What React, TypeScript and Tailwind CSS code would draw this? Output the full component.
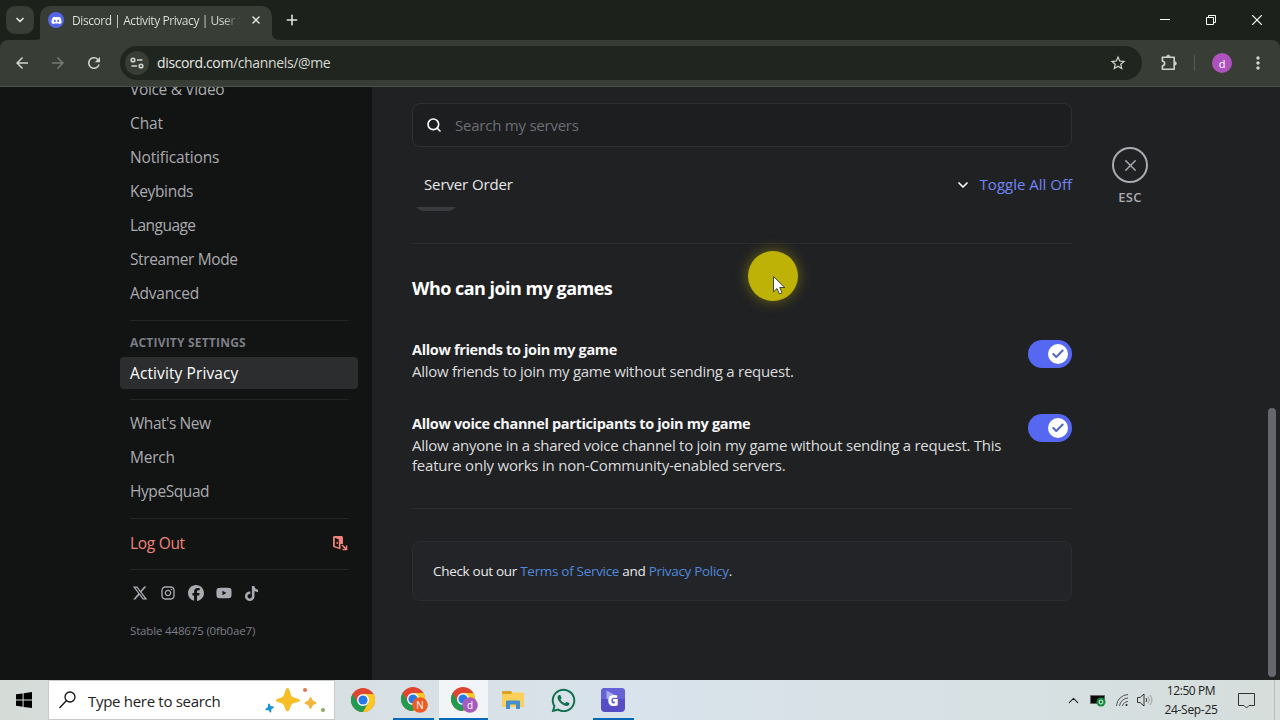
import type { ReactNode } from "react";
import { Check, ChevronDown, ChevronUp, Plus, Search, X } from "lucide-react";
import { FaDiscord, FaFacebook, FaTiktok, FaWhatsapp, FaXTwitter, FaYoutube } from "react-icons/fa6";
import { RiInstagramLine } from "react-icons/ri";
import { MdArrowBack, MdArrowForward, MdMoreVert, MdRefresh, MdStarBorder } from "react-icons/md";

interface NavEntry {
  label: string;
  spacing: string;
}

const appNav: NavEntry[] = [
  { label: "Voice & Video", spacing: "tracking-[-0.33px]" },
  { label: "Chat", spacing: "tracking-[-0.1px]" },
  { label: "Notifications", spacing: "tracking-[-0.15px]" },
  { label: "Keybinds", spacing: "tracking-[-0.33px]" },
  { label: "Language", spacing: "tracking-[-0.55px]" },
  { label: "Streamer Mode", spacing: "tracking-[-0.38px]" },
  { label: "Advanced", spacing: "tracking-[-0.22px]" },
];

const extraNav: NavEntry[] = [
  { label: "What's New", spacing: "tracking-[-0.47px]" },
  { label: "Merch", spacing: "tracking-[-0.25px]" },
  { label: "HypeSquad", spacing: "tracking-[-0.42px]" },
];

function NavItem({ label, spacing }: NavEntry) {
  return (
    <div className="flex items-center h-8 mb-0.5 shrink-0 px-2.5 leading-6 whitespace-nowrap">
      <span className={spacing}>{label}</span>
    </div>
  );
}

function Separator() {
  return <div className="h-px shrink-0 mx-2.5 bg-[#242626]"></div>;
}

function TabStrip() {
  return (
    <header className="flex h-10 shrink-0 bg-[#1c211b] text-[#e3e5df]">
      <div className="flex items-center justify-center mt-1.5 ml-1.5 size-7 rounded-[9px] bg-[#383d35]">
        <ChevronDown size={12} strokeWidth={3.4} />
      </div>
      <svg width="10" height="10" viewBox="0 0 10 10" className="self-end -mr-px">
        <path d="M10 0v10H0Q10 10 10 0" fill="#383d35" />
      </svg>
      <div className="flex items-center w-[232px] h-[34px] mt-1.5 -ml-[3px] pl-2 rounded-t-[10px] bg-[#383d35]">
        <div className="flex items-center justify-center size-4 mb-1.5 rounded-full bg-[#5465e8]">
          <FaDiscord size={11} color="#fff" />
        </div>
        <span className="ml-2 mb-1 w-[168px] whitespace-nowrap font-['Open_Sans',sans-serif] text-[12px] tracking-[-0.43px] bg-linear-to-r from-[#e3e5df] from-90% to-[#383d35] to-100% bg-clip-text text-transparent">
          Discord | Activity Privacy | User S
        </span>
        <X size={12} strokeWidth={3} className="ml-2.5 mb-1.5" />
      </div>
      <svg width="10" height="10" viewBox="0 0 10 10" className="self-end -ml-px">
        <path d="M0 0v10h10Q0 10 0 0" fill="#383d35" />
      </svg>
      <Plus size={16} strokeWidth={2.4} className="mt-3 ml-[3px]" />
      <div className="flex items-center gap-[36px] ml-auto pr-[18px] text-white">
        <svg width="10" height="10" viewBox="0 0 10 10">
          <path d="M0 4.5h10" stroke="currentColor" />
        </svg>
        <svg width="10" height="10" viewBox="0 0 10 10" fill="none" stroke="currentColor">
          <path d="M.5 2.5h7v7h-7zM2.5 2.5v-2h7v7h-2" />
        </svg>
        <svg width="10" height="10" viewBox="0 0 10 10">
          <path d="m0 0 10 10M10 0 0 10" stroke="currentColor" strokeWidth="1.2" />
        </svg>
      </div>
    </header>
  );
}

function Toolbar() {
  return (
    <div className="bg-[#1c211b] shrink-0">
      <div className="flex items-center h-[46px] rounded-t-lg bg-[#383d35] text-[#d2d5cd]">
        <MdArrowBack size={18} className="ml-[13px]" />
        <MdArrowForward size={18} className="ml-[18px] text-[#767a72]" />
        <MdRefresh size={18} className="ml-[18px]" />
        <div className="flex items-center w-[1022px] h-[34px] ml-[17px] rounded-full bg-[#20251f]">
          <div className="flex items-center justify-center size-6 ml-[5px] rounded-full bg-[#383d35]">
            <svg width="14" height="12" viewBox="0 0 14 12" fill="none" stroke="currentColor" strokeWidth="1.6">
              <circle cx="3" cy="3" r="1.8" />
              <path d="M7 3h5.5M1.5 9H7" />
              <circle cx="11" cy="9" r="1.8" />
            </svg>
          </div>
          <span className="ml-2 pb-px font-['Open_Sans',sans-serif] text-[14px] tracking-[-0.36px] text-[#d8dad4]">
            <span className="text-[#e8eae4]">discord.com</span>/channels/@me
          </span>
          <MdStarBorder size={18} className="ml-auto mr-[15px]" />
        </div>
        <svg width="18" height="18" viewBox="0 0 18 18" fill="none" stroke="currentColor" strokeWidth="1.6" strokeLinejoin="round" className="ml-[18px]">
          <path d="M2.4 3.3h11.8v11.9H2.4v-3.5a2.2 2.2 0 0 0 0-4.4z" />
          <path d="M6.5 2.8a1.8 1.8 0 0 1 3.6 0zM14.7 7.6a1.8 1.8 0 0 1 0 3.6z" fill="currentColor" strokeWidth=".5" />
        </svg>
        <div className="w-px h-4 ml-4 bg-[#565b52]"></div>
        <div className="flex items-center justify-center size-5 ml-[17px] rounded-full bg-[#ae53bd] text-white font-['Open_Sans',sans-serif] text-[11px] leading-none">
          d
        </div>
        <MdMoreVert size={20} className="ml-4" />
      </div>
      <div className="h-px bg-[#4c5149]"></div>
    </div>
  );
}

function Sidebar() {
  return (
    <aside className="flex w-[372px] shrink-0 bg-[#121313] pl-[120px] text-[15.5px] font-medium text-[#aaabb0]">
      <nav className="flex flex-col w-[238px] -mt-[14px]">
        {appNav.map((item) => (
          <NavItem key={item.label} {...item} />
        ))}
        <div className="mt-[9px]">
          <Separator />
        </div>
        <div className="flex items-center shrink-0 h-9 pt-2 px-2.5 text-[12px] font-bold tracking-[0.2px] text-[#7c7e86]">
          ACTIVITY SETTINGS
        </div>
        <div className="flex items-center h-8 shrink-0 px-2.5 leading-6 rounded bg-[#2b2d2e] text-white">
          <span className="tracking-[0.1px]">Activity Privacy</span>
        </div>
        <div className="mt-2.5 mb-[7px]">
          <Separator />
        </div>
        {extraNav.map((item) => (
          <NavItem key={item.label} {...item} />
        ))}
        <div className="mt-[9px] mb-2">
          <Separator />
        </div>
        <div className="flex items-center justify-between h-8 shrink-0 px-2.5 leading-6 text-[#f2837a]">
          <span className="tracking-[-0.3px]">Log Out</span>
          <svg width="16" height="16" viewBox="0 0 16 16" fill="none">
            <path d="M2.5 1h7A1.5 1.5 0 0 1 11 2.5V9H8.5v5.5L3 12.5A2 2 0 0 1 1 11V2.5A1.5 1.5 0 0 1 2.5 1" fill="currentColor" />
            <path d="m2.8 2.8 4 1.7v8L2.8 11z" fill="#121313" />
            <path d="M5.2 6.8v2.2" stroke="currentColor" strokeWidth="1.2" />
            <path d="m10 10 4.5 4.5M14.5 10.5v4h-4" stroke="currentColor" strokeWidth="1.6" />
          </svg>
        </div>
        <div className="mt-2.5">
          <Separator />
        </div>
        <div className="flex items-center gap-3 h-4 mt-[15px] px-3">
          <FaXTwitter size={16} />
          <RiInstagramLine size={16} />
          <FaFacebook size={16} />
          <FaYoutube size={16} />
          <FaTiktok size={15} />
        </div>
        <p className="mt-[22px] px-2.5 text-[11.5px] leading-4 tracking-[-0.16px] font-normal text-[#7c7e86]">
          Stable 448675 (0fb0ae7)
        </p>
      </nav>
    </aside>
  );
}

function Toggle() {
  return (
    <div className="flex items-center justify-end shrink-0 w-11 h-7 pr-1 rounded-full bg-[#5668f2]">
      <div className="flex items-center justify-center size-5 rounded-full bg-white">
        <Check size={14} strokeWidth={3.6} color="#5668c8" />
      </div>
    </div>
  );
}

function SettingRow({ title, children }: { title: ReactNode; children: ReactNode }) {
  return (
    <div className="flex justify-between">
      <div>
        <h3 className="text-[14.5px] leading-5 font-bold tracking-[-0.35px] text-[#f5f5f6]">{title}</h3>
        <div className="mt-px pb-px leading-5 tracking-[-0.27px] text-[#dcddde] whitespace-nowrap">{children}</div>
      </div>
      <Toggle />
    </div>
  );
}

function Content() {
  return (
    <main className="flex grow bg-[#202123] pl-10 text-[15px] text-[#e8e8ea]">
      <div className="w-[660px] pt-4">
        <div className="flex items-center h-11 px-[13px] rounded-lg border border-[#303134] bg-[#1d1e20]">
          <Search size={16} strokeWidth={2.4} className="text-white" />
          <span className="ml-[13px] tracking-[-0.23px] text-[#6c6d74]">Search my servers</span>
        </div>
        <div className="flex items-center h-[60px] pl-3 pt-[15px] font-medium">
          <span className="tracking-[-0.12px]">Server Order</span>
          <ChevronDown size={16} strokeWidth={2.5} className="ml-auto mr-[9px] text-white" />
          <span className="text-[#7186f5]">Toggle All Off</span>
        </div>
        <svg width="48" height="4" viewBox="0 0 48 4" className="block">
          <path d="M4 0h40q-4 4-8 4H12Q8 4 4 0" fill="#3b3c40" />
        </svg>
        <div className="h-px mt-8 bg-[#2c2d30]"></div>
        <h2 className="mt-8 text-[18px] leading-6 font-bold tracking-[-0.52px] text-white">
          Who can join my games
        </h2>
        <div className="flex flex-col gap-8 mt-10">
          <SettingRow title="Allow friends to join my game">
            Allow friends to join my game without sending a request.
          </SettingRow>
          <SettingRow title="Allow voice channel participants to join my game">
            Allow anyone in a shared voice channel to join my game without sending a request. This
            <br />
            <span className="tracking-[-0.21px]">feature only works in non-Community-enabled servers.</span>
          </SettingRow>
        </div>
        <div className="h-px mt-8 bg-[#2c2d30]"></div>
        <div className="flex items-center h-[60px] mt-8 px-5 rounded-lg border border-[#2c2d30] bg-[#232428] text-[13.5px] tracking-[-0.31px]">
          <p className="whitespace-nowrap">
            Check out our <span className="text-[#5089dc]">Terms of Service</span> and{" "}
            <span className="text-[#5089dc]">Privacy Policy</span>.
          </p>
        </div>
      </div>
      <div className="flex flex-col items-center w-9 ml-10 pt-[60px] text-[#aaabb0]">
        <div className="flex items-center justify-center size-9 rounded-full border-2">
          <X size={19} strokeWidth={1.7} className="shrink-0" />
        </div>
        <span className="mt-1 text-[13px] leading-5 font-semibold tracking-[0.3px]">ESC</span>
      </div>
      <div className="w-2 h-[269px] mt-[321px] ml-auto mr-1 rounded-full bg-[#66676e]"></div>
    </main>
  );
}

function Chrome({ badge }: { badge?: ReactNode }) {
  return (
    <svg width="28" height="28" viewBox="0 0 28 28" className="font-['Open_Sans',sans-serif]">
      <circle cx="13" cy="14" r="12" fill="#e0452f" />
      <path d="M2.6 8A12 12 0 0 0 13 26l5.2-9-5.2-3-5.2 3z" fill="#219b52" />
      <path d="M13 26a12 12 0 0 0 10.4-18H13l5.2 9z" fill="#fcc821" />
      <circle cx="13" cy="14" r="6" fill="#fff" />
      <circle cx="13" cy="14" r="4.6" fill="#2878e8" />
      {badge}
    </svg>
  );
}

function Taskbar() {
  return (
    <footer className="flex h-10 shrink-0 bg-linear-to-r from-[#d5dcd8] via-[#d9e3ec] to-[#d5dedb] font-['Open_Sans',sans-serif] text-[#222]">
      <div className="flex items-center justify-center w-12">
        <svg width="16" height="16" viewBox="0 0 16 16">
          <path d="M0 2.3 6.6 1.4v6.2H0zM7.6 1.2 16 0v7.6H7.6zM0 8.5h6.6v6.2L0 13.8zM7.6 8.5H16V16l-8.4-1.1z" />
        </svg>
      </div>
      <div className="flex items-center w-[287px] border border-[#c6c9c8] bg-white">
        <svg width="18" height="18" viewBox="0 0 18 18" fill="none" stroke="#111" strokeWidth="1.3" className="ml-2.5">
          <circle cx="11" cy="6" r="5" />
          <path d="m7.5 9.5-7 7.5" />
        </svg>
        <span className="ml-[11px] pt-0.5 text-[15px] tracking-[-0.3px] whitespace-nowrap">Type here to search</span>
        <svg width="62" height="26" viewBox="0 0 62 26" className="ml-auto mr-2">
          <path d="M23.5 1c2.2 0 3 7 4.5 8.5s8 2 8 4-6.500 2-8 3.500-2.300 7.500-4.500 7.500-3-6-4.500-7.500-7-1.500-7-3.500 5.500-2.500 7-4S21.300 1 23.500 1" fill="#f8be27" />
          <path d="M46.5 10c1.2 0 1.6 2.8 2.4 3.6s3.600 1.200 3.600 2.400-2.800 1.400-3.600 2.200-1.200 3.800-2.400 3.800-1.400-3-2.200-3.800-3.800-1-3.800-2.200 3-1.600 3.800-2.400 1-3.600 2.200-3.600" fill="#f3b63c" />
          <path d="M4.8 16.5c1.2-.2 1.2 2 2 2.600s3-.2 3.200 1-2 1.300-2.500 2.200.4 3-.8 3.200-1.400-1.700-2.200-2.200-2.900.5-3.200-.7 1.900-1.400 2.400-2.300 0-3.600 1.100-3.800" fill="#1a94d2" />
          <circle cx="41" cy="3" r="2" fill="#df7650" />
          <circle cx="59" cy="23" r="2" fill="#87ab60" />
        </svg>
      </div>
      <div className="flex">
        <div className="flex items-center justify-center w-[50px] ml-1">
          <Chrome />
        </div>
        <div className="flex items-center justify-center w-[41px] ml-1 pl-px border-b-2 border-[#0568b8]">
          <Chrome
            badge={
              <g>
                <circle cx="20" cy="20" r="7.8" fill="#ee5a22" />
                <text x="20" y="23.5" fontSize="10" fill="#fff" textAnchor="middle">N</text>
              </g>
            }
          />
        </div>
        <div className="flex items-center justify-center w-[49px] ml-[5px] border-b-2 border-[#0568b8] bg-[#f2f5f7]">
          <Chrome
            badge={
              <g>
                <circle cx="20" cy="20" r="7.8" fill="#a65bbd" />
                <text x="20" y="23.5" fontSize="10" fill="#fff" textAnchor="middle">d</text>
              </g>
            }
          />
        </div>
        <div className="flex items-center justify-center w-[50px]">
          <svg width="22" height="20" viewBox="0 0 22 20">
            <path d="M0 2a1 1 0 0 1 1-1h8l2 3H0z" fill="#d9a21e" />
            <path d="M0 4h9l1.5-1.5H21a1 1 0 0 1 1 1V17H0z" fill="#fad05a" />
            <path d="M4 19v-7.5a1 1 0 0 1 1-1h12a1 1 0 0 1 1 1V19h-4v-4.5H8V19z" fill="#438fce" />
          </svg>
        </div>
        <div className="flex items-center justify-center w-[50px]">
          <FaWhatsapp size={27} color="#12704f" />
        </div>
        <div className="flex items-center justify-center w-[41px] ml-[5px] border-b-2 border-[#0568b8]">
          <svg width="24" height="24" viewBox="0 0 24 24" className="mt-0.5 mr-px">
            <rect width="24" height="24" rx="4" fill="#564cc4" />
            <path d="M0 4a4 4 0 0 1 4-4h16a4 4 0 0 1 4 4v7H0z" fill="#6462d4" />
            <path d="M5.5 2.5 13 6.5l-7.5 5z" fill="#a9a8ec" />
            <text x="12" y="17.5" fontSize="15" fontWeight="800" fill="#fff" textAnchor="middle">G</text>
          </svg>
        </div>
      </div>
      <div className="flex items-center ml-auto">
        <ChevronUp size={17} strokeWidth={1.5} />
        <svg width="17" height="14" viewBox="0 0 17 14" className="ml-2">
          <path d="M.5 2.5h14v8H.5z" fill="#0b0b0b" stroke="#666" />
          <circle cx="11" cy="9" r="4.5" fill="#16883f" />
          <circle cx="11" cy="9" r="2" fill="none" stroke="#d8f0dd" />
        </svg>
        <svg width="14" height="14" viewBox="0 0 14 14" fill="none" stroke="#555" className="ml-2">
          <path d="M1.5 13A12 12 0 0 1 13 1.5M4.5 13A9 9 0 0 1 13 5M7.5 13A6 6 0 0 1 13 8.5" />
          <circle cx="11.5" cy="12" r="1" fill="#222" stroke="none" />
        </svg>
        <svg width="16" height="14" viewBox="0 0 16 14" fill="none" stroke="#333" className="ml-2">
          <path d="M.5 4.5H3L7 1v12L3 9.5H.5z" />
          <path d="M9 5q1.5 2 0 4" />
          <path d="M11 3.5q3 3.5 0 7M13 2q4 5 0 10" stroke="#999" />
        </svg>
        <div className="flex flex-col items-center w-[64px] ml-1.5 text-[12px] leading-[19px] whitespace-nowrap">
          <span className="tracking-[-0.4px]">12:50 PM</span>
          <span className="tracking-[-0.3px]">24-Sep-25</span>
        </div>
        <svg width="17" height="17" viewBox="0 0 17 17" fill="none" stroke="#333" className="ml-[15px]">
          <path d="M.5 1.5h16v12H11L8.5 16 6 13.5H.5z" />
        </svg>
        <div className="w-px h-10 ml-[19px] mr-[5px] bg-[#b9bfc0]"></div>
      </div>
    </footer>
  );
}

// Mouse pointer with the recorder's highlight disc behind it
function Pointer() {
  return (
    <div className="absolute left-[748px] top-[251px] size-[50px] rounded-full bg-[#beb207] shadow-[0_0_14px_#beb20780]">
      <svg width="14" height="20" viewBox="0 0 14 20" className="absolute left-[25px] top-[25px]">
        <path d="M.5.5v15.3L4 12.5 6.5 18 9 16.8l-2.3-5.3h5z" fill="#fff" stroke="#222" strokeWidth=".8" />
      </svg>
    </div>
  );
}

export default function App() {
  return (
    <div className="relative flex flex-col w-[1280px] h-[720px] overflow-hidden font-['Open_Sans',sans-serif]">
      <TabStrip />
      <Toolbar />
      <div className="flex h-[593px] overflow-hidden">
        <Sidebar />
        <Content />
      </div>
      <Taskbar />
      <Pointer />
    </div>
  );
}
